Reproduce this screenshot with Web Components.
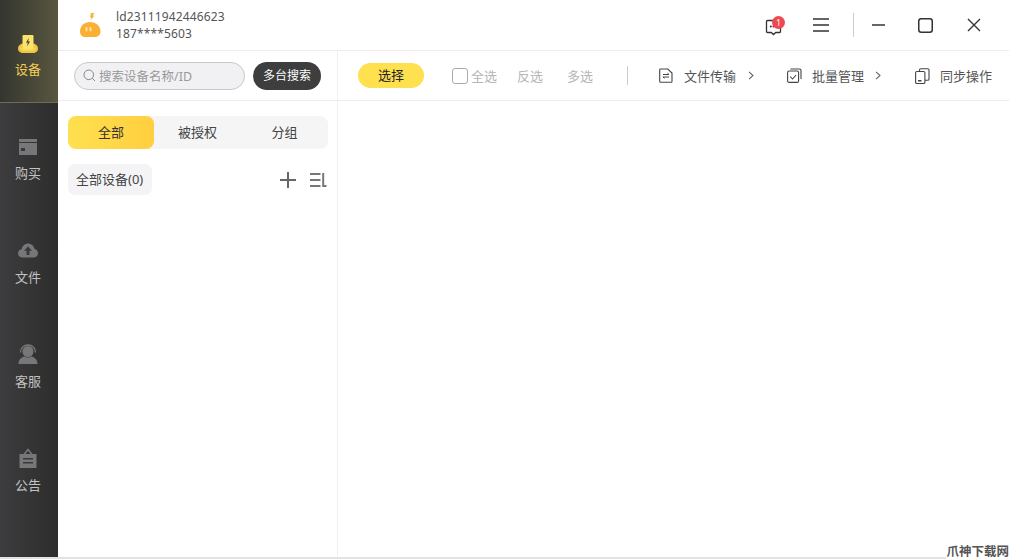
<!DOCTYPE html>
<html lang="zh">
<head>
<meta charset="utf-8">
<title>设备</title>
<style>
	html, body {
		margin: 0;
		height: 100%;
		overflow: hidden;
		background: #fff;
		font-family: "Noto Sans", "Noto Sans CJK SC", sans-serif;
	}
</style>
</head>
<body>
<app-shell></app-shell>
<script>
const icons = {
	device: '<svg width="22" height="20" viewBox="0 0 22 20"><path d="M5.500 9.500C2.800 10.300 1 12 1 14.500 1 17.300 3.200 19 6 19h10c2.800 0 5-1.700 5-4.500 0-2.500-1.800-4.200-4.500-5z" fill="#f0c63e"/><rect x="5.500" y="1" width="11" height="14.500" rx="1" fill="#fbe26c"/><path d="M11.800 3.800 9 8.700h1.800L10 12.500l3-5h-1.800z" fill="#4a4632"/><path d="M3.500 13.500c.2 1.500 1.200 2.500 3 2.500h9c1.800 0 2.800-1 3-2.500" fill="none" stroke="#fbe26c" stroke-width="1"/></svg>',
	buy: '<svg width="20" height="18" viewBox="0 0 20 18"><rect x="1" y="1" width="18" height="3" fill="#77777a"/><rect x="1" y="5" width="18" height="12" fill="#77777a"/><rect x="3" y="10" width="4" height="3" fill="#39393b"/></svg>',
	file: '<svg width="22" height="17" viewBox="0 0 22 17"><path d="M5.500 15.500C2.800 15.500 1 13.800 1 11.300c0-2.200 1.500-3.800 3.600-4.100C5.400 3.800 8 1.500 11.200 1.500c3.100 0 5.600 2.100 6.400 5.500 2 .4 3.400 2 3.400 4.200 0 2.500-1.800 4.300-4.500 4.300z" fill="#77777a"/><path d="M11 4.500l4 4.200h-2.500v4.300h-3V8.700H7z" fill="#39393b"/></svg>',
	service: '<svg width="22" height="21" viewBox="0 0 22 21"><circle cx="11" cy="7.500" r="5.500" fill="#77777a"/><path d="M3.500 8.500C3.500 4 7 1 11 1s7.500 3 7.500 7.500" fill="none" stroke="#77777a" stroke-width="1.300"/><path d="M1.500 20c0-4 2.500-6.800 6-7.500 2 1.200 5 1.200 7 0 3.500.7 6 3.500 6 7.500z" fill="#77777a"/></svg>',
	notice: '<svg width="20" height="21" viewBox="0 0 20 21"><path d="M6 6.500 10 1.500l4 5" fill="none" stroke="#77777a" stroke-width="1.500"/><rect x="1.500" y="6" width="17" height="14" fill="#77777a"/><rect x="5" y="10" width="10" height="1.500" fill="#39393b"/><rect x="5" y="14" width="10" height="1.500" fill="#39393b"/></svg>',
	logo: '<svg width="23" height="26" viewBox="0 0 23 26"><path d="M12 1h3.500L13.500 3.500h2L11.500 8.500l1-3h-1.500z" fill="#f2b53a"/><path d="M1 19.500C1 13.800 5.500 10 11 10s10.500 3.800 10.500 9.500c0 3.200-2.300 5.500-5.500 5.500H6c-3 0-5-2.300-5-5.500z" fill="#fbb034"/><rect x="6.500" y="15" width="2" height="4.500" rx="1" fill="#ffe2a8"/><rect x="10.500" y="15" width="2" height="4.500" rx="1" fill="#ffe2a8"/></svg>',
	message: '<svg width="17" height="17" viewBox="0 0 17 17"><path d="M2.500 1.500h12a1 1 0 0 1 1 1v10a1 1 0 0 1-1 1h-3.800l-2.200 2-2.200-2H2.500a1 1 0 0 1-1-1v-10a1 1 0 0 1 1-1z" fill="none" stroke="#333" stroke-width="1.300"/><circle cx="5.800" cy="7.500" r="1" fill="#333"/><circle cx="8.500" cy="7.500" r="1" fill="#333"/></svg>',
	menu: '<svg width="16" height="14" viewBox="0 0 16 14"><path d="M0 1h16M0 7h16M0 13h16" stroke="#333" stroke-width="1.500"/></svg>',
	minimize: '<svg width="13" height="2" viewBox="0 0 13 2"><path d="M0 1h13" stroke="#333" stroke-width="1.500"/></svg>',
	maximize: '<svg width="15" height="15" viewBox="0 0 15 15"><rect x=".75" y=".75" width="13.500" height="13.500" rx="2.500" fill="none" stroke="#333" stroke-width="1.500"/></svg>',
	close: '<svg width="14" height="14" viewBox="0 0 14 14"><path d="M1 1l12 12M13 1 1 13" stroke="#333" stroke-width="1.400"/></svg>',
	search: '<svg width="13" height="13" viewBox="0 0 13 13"><circle cx="5.800" cy="5.800" r="4.800" fill="none" stroke="#888" stroke-width="1"/><path d="M9.300 9.300 12 12" stroke="#888" stroke-width="1"/></svg>',
	transfer: '<svg width="14" height="15" viewBox="0 0 14 15"><path d="M1.500 1h7.300L13 5v8.500a.8.8 0 0 1-.8.800H1.500a.8.8 0 0 1-.8-.8V1.800a.8.8 0 0 1 .8-.8z" fill="none" stroke="#444" stroke-width="1.100"/><path d="M4 6.500h6l-1.500-1.300M10 9H4l1.500 1.300" fill="none" stroke="#444" stroke-width="1"/></svg>',
	batch: '<svg width="15" height="15" viewBox="0 0 15 15"><rect x=".6" y="3" width="11" height="11.400" rx="1.500" fill="none" stroke="#444" stroke-width="1.100"/><path d="M3.500 1h9a1.500 1.500 0 0 1 1.500 1.500V11" fill="none" stroke="#444" stroke-width="1.100"/><path d="M3.200 8.500 5.500 11l3.600-4" fill="none" stroke="#444" stroke-width="1.100"/></svg>',
	sync: '<svg width="15" height="16" viewBox="0 0 15 16"><rect x=".6" y="3.500" width="9.300" height="12" rx="1.300" fill="none" stroke="#444" stroke-width="1.100"/><path d="M4.500 3.500V2A1.300 1.300 0 0 1 5.800.7h6.900A1.300 1.300 0 0 1 14 2v9a1.300 1.300 0 0 1-1.300 1.300H10" fill="none" stroke="#444" stroke-width="1.100"/><rect x="3" y="12" width="3.500" height="1.500" fill="#444"/></svg>',
	chevron: '<svg width="6" height="9" viewBox="0 0 6 9"><path d="M1 .8 5 4.500 1 8.200" fill="none" stroke="#666" stroke-width="1.100"/></svg>',
	plus: '<svg width="16" height="16" viewBox="0 0 16 16"><path d="M8 0v16M0 8h16" stroke="#666" stroke-width="2"/></svg>',
	sort: '<svg width="17" height="14" viewBox="0 0 17 14"><path d="M0 1h10.500M0 7h10.500M0 13h10.500" stroke="#777" stroke-width="2"/><path d="M13.200 0v13h3.300" fill="none" stroke="#777" stroke-width="2"/></svg>'
};

class NavItem extends HTMLElement {
	constructor() {
		super();
		const active = this.hasAttribute('active');
		const shadow = this.attachShadow({ mode: 'open' });
		shadow.innerHTML = `
<style>
	:host {
		display: flex;
		flex-direction: column;
		align-items: center;
		box-sizing: border-box;
		height: 104px;
		padding: 33px 2px 0 0;
		gap: 7px;
		font-size: 13px;
		line-height: 18px;
		color: ${active ? '#f3cd55' : '#c2c2c2'};
	}
	:host([active]) {
		background: linear-gradient(90deg, #34352f 0%, #59573f 100%);
		border-bottom: 1px solid #6d6c56;
		height: 103px;
		gap: 6px;
	}
	.icon {
		height: 21px;
		display: flex;
		align-items: center;
	}
</style>
<div class="icon">${icons[this.getAttribute('icon')]}</div>
<slot></slot>
		`;
	}
}

class SideNav extends HTMLElement {
	constructor() {
		super();
		const shadow = this.attachShadow({ mode: 'open' });
		shadow.innerHTML = `
<style>
	:host {
		display: block;
		width: 58px;
		flex: none;
		background: linear-gradient(90deg, #3d3c3e 0%, #2d2d2d 100%);
	}
</style>
<nav-item icon="device" active>设备</nav-item>
<nav-item icon="buy">购买</nav-item>
<nav-item icon="file">文件</nav-item>
<nav-item icon="service">客服</nav-item>
<nav-item icon="notice">公告</nav-item>
		`;
	}
}

class TitleBar extends HTMLElement {
	constructor() {
		super();
		const shadow = this.attachShadow({ mode: 'open' });
		shadow.innerHTML = `
<style>
	:host {
		display: flex;
		align-items: center;
		height: 51px;
		box-sizing: border-box;
		border-bottom: 1px solid #ececec;
		padding-left: 21px;
		color: #555;
	}
	.logo {
		display: flex;
		margin: 0 14px 0 0;
		width: 23px;
	}
	.user {
		font-size: 12px;
		line-height: 17px;
		letter-spacing: .13px;
	}
	.actions {
		margin-left: auto;
		display: flex;
		align-items: center;
	}
	.msg {
		position: relative;
		display: flex;
		margin: 4px 31px 0 0;
	}
	.badge {
		position: absolute;
		top: -3px;
		left: 7px;
		width: 13px;
		height: 13px;
		border-radius: 50%;
		background: #f0484e;
		color: #fff;
		font-size: 9px;
		line-height: 13px;
		text-align: center;
	}
	.menu {
		display: flex;
	}
	.sep {
		width: 1px;
		height: 24px;
		background: #ccc;
		margin: 0 17px 0 24px;
	}
	.win {
		display: flex;
		width: 14px;
		justify-content: center;
	}
</style>
<div class="logo">${icons.logo}</div>
<div class="user">
	<div>ld23111942446623</div>
	<div>187****5603</div>
</div>
<div class="actions">
	<div class="msg">${icons.message}<span class="badge">1</span></div>
	<div class="menu">${icons.menu}</div>
	<div class="sep"></div>
	<div class="win" style="margin-right:33px">${icons.minimize}</div>
	<div class="win" style="margin-right:34px;width:15px">${icons.maximize}</div>
	<div class="win" style="margin-right:28px">${icons.close}</div>
</div>
		`;
	}
}

class ToolBar extends HTMLElement {
	constructor() {
		super();
		const shadow = this.attachShadow({ mode: 'open' });
		shadow.innerHTML = `
<style>
	:host {
		display: flex;
		align-items: center;
		height: 50px;
		box-sizing: border-box;
		border-bottom: 1px solid #ececec;
		font-size: 13px;
	}
	.search {
		width: 280px;
		height: 100%;
		flex: none;
		box-sizing: border-box;
		border-right: 1px solid #f0f0f0;
		display: flex;
		align-items: center;
		padding-left: 16px;
		gap: 8px;
	}
	.field {
		width: 171px;
		height: 28px;
		box-sizing: border-box;
		border: 1px solid #c9c9cb;
		border-radius: 14px;
		background: #f1f1f3;
		display: flex;
		align-items: center;
		gap: 3px;
		padding-left: 8px;
		color: #999;
		font-size: 12.500px;
	}
	.field svg { flex: none; }
	.multi {
		width: 68px;
		height: 28px;
		border-radius: 14px;
		background: #3e3e3e;
		color: #fff;
		font-size: 12px;
		line-height: 28px;
		text-align: center;
	}
	.pick {
		width: 66px;
		height: 25px;
		margin-left: 20px;
		border-radius: 13px;
		background: #ffe04f;
		color: #222;
		line-height: 25px;
		text-align: center;
	}
	.off {
		color: #b5b5b5;
	}
	.all {
		display: flex;
		align-items: center;
		gap: 3px;
		margin-left: 28px;
	}
	.box {
		width: 14px;
		height: 14px;
		border: 1px solid #aaa;
		border-radius: 3px;
	}
	.sep {
		width: 1px;
		height: 19px;
		background: #ccc;
		margin: 0 31px 0 34px;
	}
	.tool {
		display: flex;
		align-items: center;
		color: #555;
	}
	.tool span { margin-left: 11px; }
	.tool svg:last-child { margin-left: 12px; }
</style>
<div class="search">
	<div class="field">${icons.search}<span>搜索设备名称/ID</span></div>
	<div class="multi">多台搜索</div>
</div>
<div class="pick">选择</div>
<div class="all off"><div class="box"></div>全选</div>
<div class="off" style="margin-left:20px">反选</div>
<div class="off" style="margin-left:24px">多选</div>
<div class="sep"></div>
<div class="tool">${icons.transfer}<span>文件传输</span>${icons.chevron}</div>
<div class="tool" style="margin-left:33px">${icons.batch}<span style="margin-left:10px">批量管理</span><svg width="6" height="9" viewBox="0 0 6 9" style="margin-left:11px"><path d="M1 .8 5 4.500 1 8.200" fill="none" stroke="#666" stroke-width="1.100"/></svg></div>
<div class="tool" style="margin-left:34px">${icons.sync}<span style="margin-left:10px">同步操作</span></div>
		`;
	}
}

class DevicePanel extends HTMLElement {
	constructor() {
		super();
		const shadow = this.attachShadow({ mode: 'open' });
		shadow.innerHTML = `
<style>
	:host {
		display: block;
		width: 280px;
		flex: none;
		box-sizing: border-box;
		border-right: 1px solid #f0f0f0;
		padding: 15px 9px 0 10px;
		font-size: 13px;
		color: #444;
	}
	.tabs {
		display: flex;
		height: 33px;
		border-radius: 8px;
		background: #f5f5f6;
		line-height: 33px;
		text-align: center;
	}
	.tabs div { flex: 1; }
	.tabs .on {
		flex: none;
		width: 86px;
		border-radius: 8px;
		background: linear-gradient(90deg, #ffe04f 0%, #ffcf3f 100%);
		color: #333;
	}
	.group {
		display: flex;
		align-items: center;
		margin-top: 15px;
	}
	.chip {
		height: 31px;
		padding: 0 9px 0 8px;
		border-radius: 7px;
		background: #f4f4f7;
		line-height: 31px;
	}
	.plus {
		display: flex;
		margin-left: auto;
	}
	.sort {
		display: flex;
		margin-left: 14px;
		margin-right: 1px;
	}
</style>
<div class="tabs">
	<div class="on">全部</div>
	<div>被授权</div>
	<div>分组</div>
</div>
<div class="group">
	<div class="chip">全部设备(0)</div>
	<div class="plus">${icons.plus}</div>
	<div class="sort">${icons.sort}</div>
</div>
		`;
	}
}

class AppShell extends HTMLElement {
	constructor() {
		super();
		const shadow = this.attachShadow({ mode: 'open' });
		shadow.innerHTML = `
<style>
	:host {
		display: flex;
		height: 559px;
		box-sizing: border-box;
		border-bottom: 2px solid #e2e2e2;
		position: relative;
	}
	.main {
		flex: 1;
		display: flex;
		flex-direction: column;
		min-width: 0;
	}
	device-panel { flex: 1; }
	.mark {
		position: absolute;
		right: 0;
		bottom: -2px;
		font-size: 12.500px;
		line-height: 15px;
		font-weight: 700;
		color: #555;
		background: #fff;
	}
</style>
<side-nav></side-nav>
<div class="main">
	<title-bar></title-bar>
	<tool-bar></tool-bar>
	<device-panel></device-panel>
</div>
<div class="mark">爪神下载网</div>
		`;
	}
}

customElements.define('nav-item', NavItem);
customElements.define('side-nav', SideNav);
customElements.define('title-bar', TitleBar);
customElements.define('tool-bar', ToolBar);
customElements.define('device-panel', DevicePanel);
customElements.define('app-shell', AppShell);
</script>
</body>
</html>
